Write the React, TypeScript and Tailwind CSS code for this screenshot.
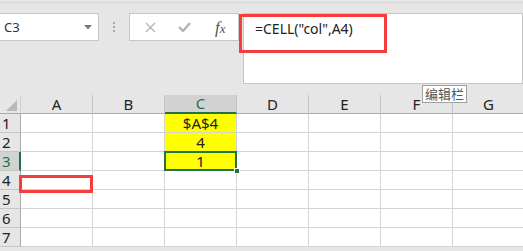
import React from "react";

const cols = ["A", "B", "C", "D", "E", "F", "G"];
const rows = [1, 2, 3, 4, 5, 6, 7];

const font = { fontFamily: '"Noto Sans", "Noto Sans CJK SC", sans-serif' };

function cellContent(r: number, c: string) {
  if (c === "C" && r === 1) return "$A$4";
  if (c === "C" && r === 2) return "4";
  if (c === "C" && r === 3) return "1";
  return "";
}

export default function App() {
  return (
    <div className="relative w-[523px] h-[251px] overflow-hidden bg-[#e6e6e6] text-[#222]" style={font}>
      {/* toolbar */}
      <div className="h-[95px] border-t-[2px] border-[#e6e6e6]">
        <div className="h-px bg-[#d9d9d9]" />
        <div className="flex items-start pt-[10px]">
          <div className="w-[99px] h-[28px] bg-white border border-l-0 border-[#c6c6c6] flex items-center justify-between pl-[4px] pr-[6px]">
            <span className="text-[13px] text-[#333] leading-none">C3</span>
            <svg width="8" height="5" viewBox="0 0 8 5">
              <path d="M0 0 L8 0 L4 4.5 Z" fill="#7a7a7a" />
            </svg>
          </div>
          <div className="w-[30px] h-[28px] flex flex-col items-center justify-center gap-[2px]">
            <div className="w-[2px] h-[2px] bg-[#a8a8a8]" />
            <div className="w-[2px] h-[2px] bg-[#a8a8a8]" />
            <div className="w-[2px] h-[2px] bg-[#a8a8a8]" />
          </div>
          <div className="w-[110px] h-[28px] bg-white border border-[#c6c6c6] flex items-center">
            <div className="w-[37px] flex justify-center pl-[4px]">
              <svg width="11" height="11" viewBox="0 0 11 11">
                <path d="M1 1 L10 10 M10 1 L1 10" stroke="#b4b4b4" strokeWidth="1.3" />
              </svg>
            </div>
            <div className="w-[37px] flex justify-center">
              <svg width="13" height="10" viewBox="0 0 13 10">
                <path d="M1 5 L5 9 L12 1" stroke="#b4b4b4" strokeWidth="2.4" fill="none" />
              </svg>
            </div>
            <div className="w-[36px] flex justify-center">
              <span className="italic text-[17px] text-[#555] leading-none" style={{ fontFamily: '"Liberation Serif", serif' }}>
                f<span className="text-[13px]">x</span>
              </span>
            </div>
          </div>
          <div className="w-[4px]" />
          <div className="relative w-[280px] h-[71px] bg-white border border-[#c6c6c6]">
            <div className="absolute left-[-5px] top-[0px] w-[148px] h-[39px] border-[3px] border-[#f53d3d]" />
            <div className="pl-[11px] pt-[5px] text-[14px] leading-[20px] text-[#222]">=CELL("col",A4)</div>
          </div>
        </div>
      </div>

      {/* grid */}
      <div className="grid grid-cols-[21px_repeat(7,72px)] grid-rows-[19px_repeat(7,19px)] bg-white">
        <div className="bg-[#e6e6e6] border-r border-b border-[#ababab] border-r-[#d0d0d0] relative">
          <svg className="absolute left-[6px] top-[5px]" width="11" height="11" viewBox="0 0 11 11">
            <path d="M11 0 L11 11 L0 11 Z" fill="#b9b9b9" />
          </svg>
        </div>
        {cols.map((c) => (
          <div
            key={c}
            className={
              c === "C"
                ? "bg-[#d2d2d2] border-r border-[#c6c6c6] border-b-[2px] border-b-[#217346] flex items-center justify-center text-[15px] text-[#217346] leading-none"
                : "bg-[#e6e6e6] border-r border-[#c6c6c6] border-b border-b-[#ababab] flex items-center justify-center text-[15px] leading-none"
            }
          >
            {c}
          </div>
        ))}
        {rows.map((r) => (
          <React.Fragment key={r}>
            <div
              className={
                r === 3
                  ? "bg-[#d2d2d2] border-r-[2px] border-[#217346] border-b border-b-[#c6c6c6] flex items-center pl-[2px] text-[15px] text-[#217346] leading-none"
                  : "bg-[#e6e6e6] border-r border-[#ababab] border-b border-b-[#c6c6c6] flex items-center pl-[2px] text-[15px] leading-none"
              }
            >
              {r}
            </div>
            {cols.map((c) => {
              const yellow = c === "C" && r <= 3;
              return (
                <div
                  key={c}
                  className={
                    (yellow ? "bg-[#ffff00] " : "bg-white ") +
                    "border-r border-b border-[#d4d4d4] flex items-center justify-center text-[15px] leading-none text-[#222]"
                  }
                >
                  {cellContent(r, c)}
                </div>
              );
            })}
          </React.Fragment>
        ))}
      </div>

      {/* selection C3 */}
      <div className="absolute left-[164px] top-[151px] w-[73px] h-[20px] border-[2px] border-[#217346]" />
      <div className="absolute left-[234px] top-[168px] w-[6px] h-[6px] bg-[#217346] border border-white" />

      {/* red box on A4 */}
      <div className="absolute left-[19px] top-[175px] w-[74px] h-[18px] border-[3px] border-[#f53d3d]" />

      {/* tooltip */}
      <div className="absolute left-[422px] top-[85px] h-[18px] px-[2px] bg-white border border-[#a0a0a0] text-[13px] leading-[16px] text-[#555]" style={{ fontFamily: '"Noto Sans CJK SC", sans-serif' }}>
        编辑栏
      </div>
    </div>
  );
}
